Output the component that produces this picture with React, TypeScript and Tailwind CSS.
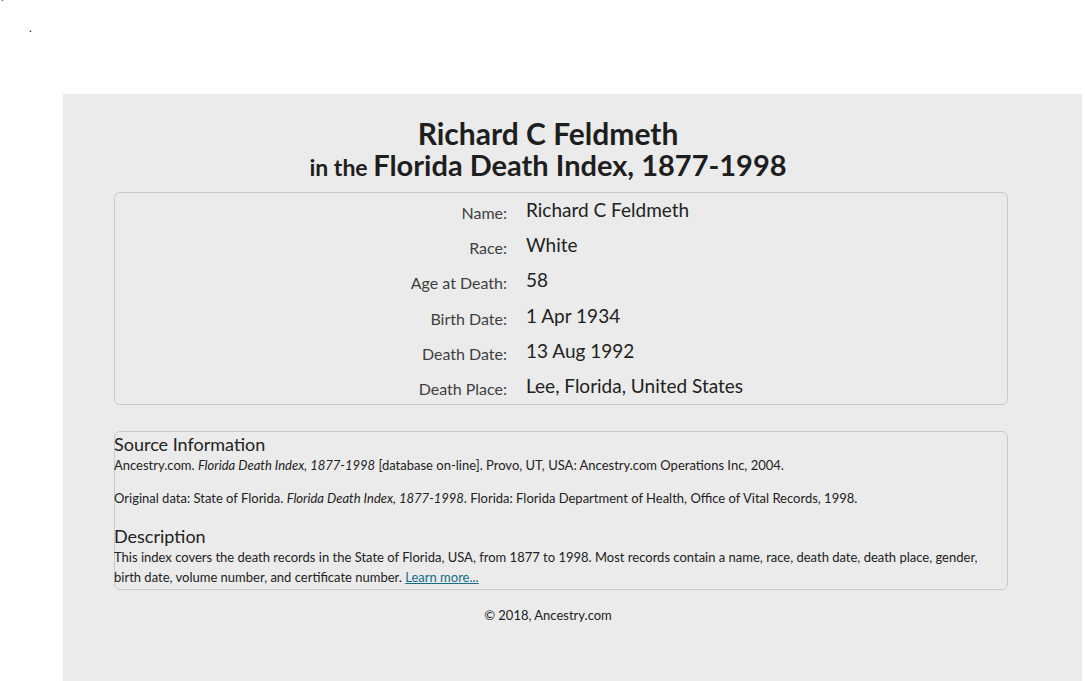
import React from 'react';

// Record page for a single entry in the Florida Death Index
const rows: { label: string; value: string }[] = [
    { label: 'Name:', value: 'Richard C Feldmeth' },
    { label: 'Race:', value: 'White' },
    { label: 'Age at Death:', value: '58' },
    { label: 'Birth Date:', value: '1 Apr 1934' },
    { label: 'Death Date:', value: '13 Aug 1992' },
    { label: 'Death Place:', value: 'Lee, Florida, United States' },
];

const App: React.FC = () => {
    return (
        <div className="relative w-[1085px] h-[681px] bg-white overflow-hidden font-['Lato','Liberation_Sans',sans-serif] text-[#222]">
            {/* stray dots at the top of the page */}
            <div className="absolute left-[1px] top-[-9px] text-[12px] leading-none text-[#555]">.</div>
            <div className="absolute left-[29px] top-[22px] text-[12px] leading-none text-[#222]">.</div>

            <div className="absolute left-[63px] top-[94px] w-[1019px] h-[587px] bg-[#ebebeb] pt-[23px]">
                {/* Title */}
                <h1 className="w-[970px] text-center font-bold leading-[32px] text-[#1e1e1e]">
                    <span className="block text-[30px]">Richard C Feldmeth</span>
                    <span className="block text-[29px]">
                        <span className="text-[23px]">in the </span>Florida Death Index, 1877-1998
                    </span>
                </h1>

                {/* Record details */}
                <div className="ml-[51px] mt-[9px] w-[894px] h-[213px] border border-[#c9c9c9] rounded-[6px] pt-[3px]">
                    {rows.map((row) => (
                        <div key={row.label} className="flex h-[35.2px]">
                            <div className="w-[392px] text-right text-[16px] text-[#3f3f3f] pt-[5px]">{row.label}</div>
                            <div className="ml-[19px] text-[19px] text-[#222]">{row.value}</div>
                        </div>
                    ))}
                </div>

                {/* Source information */}
                <div className="ml-[51px] mt-[26px] w-[894px] border border-[#c9c9c9] rounded-[6px] pb-[2px] text-[13px] leading-[20px] text-[#222]">
                    <h3 className="-ml-[1px] text-[18px] leading-[22px] mt-[1px]">Source Information</h3>
                    <p className="-ml-[1px]">
                        Ancestry.com. <i>Florida Death Index, 1877-1998</i> [database on-line]. Provo, UT, USA: Ancestry.com Operations Inc, 2004.
                    </p>
                    <p className="-ml-[1px] mt-[13px]">
                        Original data: State of Florida. <i>Florida Death Index, 1877-1998</i>. Florida: Florida Department of Health, Office of Vital Records, 1998.
                    </p>
                    <h3 className="-ml-[1px] text-[18px] leading-[22px] mt-[17px]">Description</h3>
                    <p className="-ml-[1px] pr-[20px]">
                        This index covers the death records in the State of Florida, USA, from 1877 to 1998. Most records contain a name, race, death date, death place, gender, birth date, volume number, and certificate number.{' '}
                        <a href="#" className="text-[#146c8a] underline">Learn more...</a>
                    </p>
                </div>

                <p className="w-[970px] mt-[16px] text-center text-[13px] text-[#222]">© 2018, Ancestry.com</p>
            </div>
        </div>
    );
};

export default App;
